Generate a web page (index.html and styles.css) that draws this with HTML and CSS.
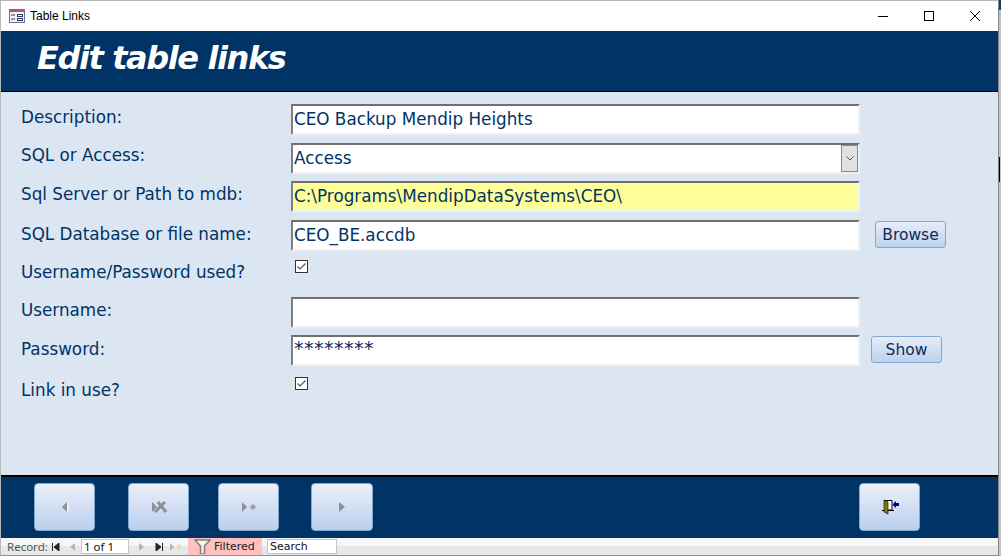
FILE: index.html
```html
<!DOCTYPE html>
<html lang="en">
<head>
<meta charset="utf-8">
<title>Table Links</title>
<link rel="stylesheet" href="styles.css">
</head>
<body>
<div class="window">
  <div class="titlebar">
    <svg class="app-icon" width="16" height="14" viewBox="0 0 16 14">
      <rect x="0.5" y="0.5" width="15" height="13" fill="#eef1f8" stroke="#6a7092"/>
      <rect x="1" y="1" width="14" height="2" fill="#b5547e"/>
      <path d="M2 6h4M2 10h4" stroke="#33395f" fill="none"/>
      <rect x="8.5" y="5.5" width="5" height="2" fill="#fff" stroke="#33395f"/>
      <rect x="8.5" y="9.5" width="5" height="2" fill="#fff" stroke="#33395f"/>
    </svg>
    <span class="title-text">Table Links</span>
    <div class="win-controls">
      <svg class="win-btn" width="46" height="30" viewBox="0 0 46 30"><path d="M18 15.5h10" stroke="#000"/></svg>
      <svg class="win-btn" width="46" height="30" viewBox="0 0 46 30"><rect x="18.5" y="10.5" width="9" height="9" fill="none" stroke="#000"/></svg>
      <svg class="win-btn" width="46" height="30" viewBox="0 0 46 30"><path d="M18 10l10 10M28 10l-10 10" stroke="#000" fill="none"/></svg>
    </div>
  </div>
  <header class="form-header"><h1 class="form-title">Edit table links</h1></header>
  <main class="form-body">
    <div class="row row-39">
      <label class="label">Description:</label>
      <div class="field">CEO Backup Mendip Heights</div>
    </div>
    <div class="row row-38">
      <label class="label label-tight">SQL or Access:</label>
      <div class="field field-combo">Access
        <span class="combo-btn"><svg width="8" height="5" viewBox="0 0 8 5"><path d="M0.5 0.5L4 4L7.5 0.5" fill="none" stroke="#555"/></svg></span>
      </div>
    </div>
    <div class="row row-39">
      <label class="label">Sql Server or Path to mdb:</label>
      <div class="field field-yellow">C:\Programs\MendipDataSystems\CEO\</div>
    </div>
    <div class="row row-39">
      <label class="label label-low">SQL Database or file name:</label>
      <div class="field">CEO_BE.accdb</div>
      <button class="btn btn-browse">Browse</button>
    </div>
    <div class="row row-38">
      <label class="label">Username/Password used?</label>
      <span class="check"><svg width="13" height="13" viewBox="0 0 13 13"><rect x="0.5" y="0.5" width="12" height="12" fill="#fff" stroke="#333"/><path d="M2.5 6.5L5 9L10.5 3.5" fill="none" stroke="#555" stroke-width="1.2"/></svg></span>
    </div>
    <div class="row row-38">
      <label class="label">Username:</label>
      <div class="field"></div>
    </div>
    <div class="row row-39">
      <label class="label label-low">Password:</label>
      <div class="field field-pass">********</div>
      <button class="btn btn-show">Show</button>
    </div>
    <div class="row row-39">
      <label class="label label-last">Link in use?</label>
      <span class="check check-last"><svg width="13" height="13" viewBox="0 0 13 13"><rect x="0.5" y="0.5" width="12" height="12" fill="#fff" stroke="#333"/><path d="M2.5 6.5L5 9L10.5 3.5" fill="none" stroke="#555" stroke-width="1.2"/></svg></span>
    </div>
  </main>
  <div class="form-footer">
    <button class="nav-btn nav-first" aria-label="Previous"><svg width="8" height="12" viewBox="0 0 8 12"><path d="M6 1v10L1 6z" fill="#8d9097"/><path d="M7 1v10" stroke="#fff"/></svg></button>
    <button class="nav-btn nav-second" aria-label="Delete"><svg width="16" height="12" viewBox="0 0 16 12"><path d="M1 1l5 5l-5 5z" fill="#8d9097"/><path d="M4 11L14 1M7 1l8 10" stroke="#8d9097" stroke-width="3" fill="none"/></svg></button>
    <button class="nav-btn nav-third" aria-label="New"><svg width="16" height="12" viewBox="0 0 16 12"><path d="M1 1v10l5-5z" fill="#8d9097"/><path d="M12 3v6M9 6h6M10 4l4 4M14 4l-4 4" stroke="#8d9097"/></svg></button>
    <button class="nav-btn nav-fourth" aria-label="Next"><svg width="8" height="12" viewBox="0 0 8 12"><path d="M1 1v10l6-5z" fill="#8d9097"/></svg></button>
    <button class="nav-btn nav-exit" aria-label="Exit"><svg width="18" height="16" viewBox="0 0 18 16"><path d="M3.5 13V1.5h7.5V11H7" fill="#fff" stroke="#000"/><path d="M3 1l4 2v12l-4-2z" fill="#7d7a10" stroke="#000" stroke-width="0.6"/><path d="M1 11.5h2M7 11.5h6" stroke="#000"/><path d="M11.500 5.500l3.500-3.500v2h3v3h-3v2z" fill="#000080"/></svg></button>
  </div>
  <div class="statusbar">
    <span class="rec-label">Record:</span>
    <svg class="rec-icon rec-first" width="8" height="8" viewBox="0 0 8 8"><path d="M0.5 0v8M7 0v8L2 4z" stroke="#222" fill="#222" stroke-width="1"/></svg>
    <svg class="rec-icon rec-prev" width="6" height="8" viewBox="0 0 6 8"><path d="M5 0v8L0 4z" fill="#b5b5b5"/></svg>
    <span class="rec-input">1 of 1</span>
    <svg class="rec-icon rec-next" width="6" height="8" viewBox="0 0 6 8"><path d="M1 0v8l5-4z" fill="#b5b5b5"/></svg>
    <svg class="rec-icon rec-last" width="8" height="8" viewBox="0 0 8 8"><path d="M1 0v8l5-4zM7.5 0v8" stroke="#222" fill="#222"/></svg>
    <svg class="rec-icon rec-new" width="12" height="8" viewBox="0 0 12 8"><path d="M0 0v8l4-4z" fill="#b5b5b5"/><path d="M9 1v6M6 4h6M7 2l4 4M11 2l-4 4" stroke="#e3d6ae"/></svg>
    <span class="rec-filter">
      <svg class="funnel" width="17" height="15" viewBox="0 0 17 15"><path d="M1 1h15L10.500 7v8H6.500V7z" fill="#fff2f2" stroke="#808080" stroke-width="1.6"/></svg>
      Filtered
    </span>
    <span class="rec-search">Search</span>
  </div>
</div>
<span class="edge edge-top"></span>
<span class="edge edge-mid"></span>
</body>
</html>
```
FILE: styles.css
```css
* { box-sizing: border-box; }
html, body { margin: 0; height: 100%; background: #c4c4c4; overflow: hidden; }
body { font-family: "DejaVu Sans", sans-serif; }

.window {
  width: 999px;
  height: 556px;
  border: 1px solid #b8b8b8;
  border-right-color: #858585;
  border-bottom: 1px solid #8f8f8f;
  background: #fff;
  display: flex;
  flex-direction: column;
}

.edge { position: absolute; left: 999px; width: 2px; }
.edge-top { top: 0; height: 10px; background: #1a3a66; }
.edge-mid { top: 157px; height: 25px; width: 1px; background: #000; }

.titlebar {
  height: 30px;
  flex: none;
  display: flex;
  align-items: center;
  padding-left: 8px;
  background: #fff;
}
.title-text {
  margin-left: 5px;
  font: 12px "Liberation Sans", sans-serif;
  color: #000;
}
.win-controls { margin-left: auto; display: flex; }
.win-btn { display: block; }

.form-header {
  height: 61px;
  flex: none;
  background: #003366;
  border-bottom: 1px solid #000;
  padding-left: 36px;
}
.form-title {
  margin: 0;
  font: italic bold 32px/55px "DejaVu Sans", sans-serif;
  color: #fff;
  letter-spacing: -1.4px;
}

.form-body {
  flex: 1;
  background: #dce6f2;
  padding-top: 12px;
  min-height: 0;
}
.row { display: flex; align-items: flex-start; padding-left: 20px; }
.row-39 { height: 39px; }
.row-38 { height: 38px; }
.label {
  width: 270px;
  flex: none;
  font-size: 16.8px;
  line-height: 27px;
  color: #003366;
}
.label-tight { line-height: 25px; }
.label-low { line-height: 29px; }
.label-last { padding-top: 3px; }
.field {
  width: 569px;
  height: 31px;
  flex: none;
  padding: 0 1px;
  background: #fff;
  border: 2px solid #f0f0f0;
  border-top-color: #707070;
  border-left-color: #808080;
  font-size: 16.8px;
  line-height: 27px;
  color: #003366;
  position: relative;
  white-space: nowrap;
}
.field-yellow { background: #ffff99; }
.field-pass { font-size: 19px; letter-spacing: 0.5px; line-height: 23px; }
.combo-btn {
  position: absolute;
  right: 0;
  top: 0;
  width: 17px;
  height: 27px;
  background: #e1e1e1;
  border: 1px solid #8a8a8a;
  display: flex;
  align-items: center;
  justify-content: center;
}
.check { display: block; margin-top: 1px; margin-left: 4px; height: 13px; }
.check-last { margin-top: 3px; }
.check svg { display: block; }

.btn {
  height: 27px;
  width: 71px;
  flex: none;
  padding: 0;
  margin-top: 1px;
  border: 1px solid #84a6cf;
  border-radius: 3px;
  background: linear-gradient(#e6ecf8, #bcd3ee);
  color: #0f2a55;
  font: 15.5px "DejaVu Sans", sans-serif;
}
.btn-browse { margin-left: 15px; }
.btn-show { margin-left: 11px; }

.form-footer {
  height: 63px;
  flex: none;
  background: #003366;
  border-top: 2px solid #000;
  padding: 6px 0 0 33px;
  display: flex;
  align-items: flex-start;
}
.nav-btn {
  width: 61px;
  height: 48px;
  flex: none;
  padding: 0;
  border: 1px solid #84a6cf;
  border-radius: 4px;
  background: linear-gradient(#ebeffa, #b9d0ee);
  display: flex;
  align-items: center;
  justify-content: center;
}
.nav-second { margin-left: 33px; }
.nav-third { margin-left: 29px; }
.nav-fourth { margin-left: 32px; width: 62px; }
.nav-exit { margin-left: 486px; }

.statusbar {
  height: 17px;
  flex: none;
  display: flex;
  align-items: center;
  background: linear-gradient(#f5f6f7 50%, #e6e7e8 50%);
  font: 11px "DejaVu Sans", sans-serif;
  color: #333;
}
.rec-label { margin-left: 6px; width: 45px; color: #555; font: 11.5px "Noto Sans", sans-serif; }
.rec-icon { flex: none; }
.rec-prev { margin-left: 10px; }
.rec-input {
  margin-left: 5px;
  width: 48px;
  height: 15px;
  background: #fff;
  border: 1px solid #c6c6c6;
  padding-left: 2px;
  font: 11.5px/13px "Noto Sans", sans-serif;
  color: #111;
}
.rec-next { margin-left: 9px; }
.rec-last { margin-left: 11px; }
.rec-new { margin-left: 7px; }
.rec-filter {
  margin-left: 6px;
  width: 74px;
  height: 17px;
  background: #ffc0c0;
  display: flex;
  align-items: center;
  gap: 3px;
  padding-left: 6px;
  line-height: 15px;
  color: #222;
}
.funnel { flex: none; }
.rec-search {
  margin-left: 5px;
  width: 70px;
  height: 15px;
  background: #fff;
  border: 1px solid #c6c6c6;
  padding-left: 2px;
  line-height: 13px;
  color: #111;
}
```
